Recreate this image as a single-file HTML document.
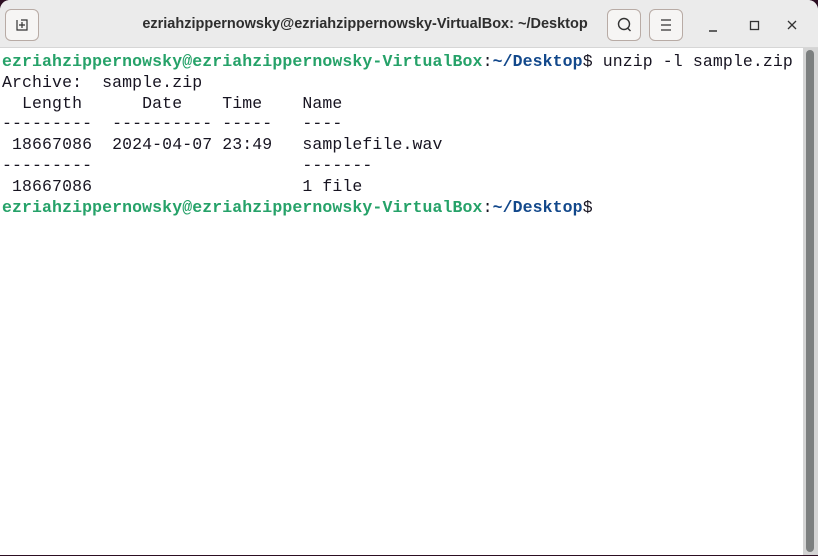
<!DOCTYPE html>
<html><head><style>
html,body{margin:0;padding:0;width:818px;height:556px;overflow:hidden;background:#2c0e22;}
.win{position:absolute;left:0;top:0;width:818px;height:555px;background:#fff;border-radius:10px 10px 0 0;overflow:hidden;}
.tb{position:absolute;left:0;top:0;width:818px;height:47px;background:#ebebeb;border-bottom:1px solid #d6d6d6;}
.title{position:absolute;left:0;width:730px;top:16px;text-align:center;font:bold 14.5px "Liberation Sans",sans-serif;color:#2e2e2e;}
.btn{position:absolute;top:9px;width:34px;height:32px;border:1px solid #b8aba5;border-radius:6px;background:#f6f5f4;box-sizing:border-box;}
.term{position:absolute;left:2px;top:52px;font:16.5px/20.8px "Liberation Mono",monospace;letter-spacing:0.11px;color:#171421;white-space:pre;}
.g{color:#26a269;font-weight:bold}.b{color:#12488b;font-weight:bold}
.sb{position:absolute;left:803px;top:48px;width:15px;height:507px;background:#d4d4d4;}
.th{position:absolute;left:806px;top:50px;width:8px;height:502px;background:#7c7f7f;border-radius:4px;}
</style></head><body>
<div class="win">
<div class="tb">
<div class="btn" style="left:5px"><svg width="32" height="30" viewBox="0 0 32 30"><path d="M11 10v10h10V10h-6M16 12v6M13 15h6" fill="none" stroke="#333" stroke-width="1.2"/></svg></div>
<div class="title">ezriahzippernowsky@ezriahzippernowsky-VirtualBox: ~/Desktop</div>
<div class="btn" style="left:607px"><svg width="32" height="30" viewBox="0 0 32 30"><circle cx="16" cy="14" r="5.5" fill="none" stroke="#333" stroke-width="1.4"/><path d="M19.5 18l3 3" stroke="#333" stroke-width="1.4"/></svg></div>
<div class="btn" style="left:649px"><svg width="32" height="30" viewBox="0 0 32 30"><path d="M11 10h10M11 15h10M11 20h10" stroke="#333" stroke-width="1.3"/></svg></div>
<svg style="position:absolute;left:700px;top:10px" width="118" height="30"><path d="M9 21h8" stroke="#333" stroke-width="1.5"/><rect x="50.5" y="11.5" width="8" height="8" fill="none" stroke="#333" stroke-width="1.3"/><path d="M88 11l8 8M96 11l-8 8" stroke="#333" stroke-width="1.3"/></svg>
</div>
<div class="term"><span class="g">ezriahzippernowsky@ezriahzippernowsky-VirtualBox</span>:<span class="b">~/Desktop</span>$ unzip -l sample.zip
Archive:  sample.zip
  Length      Date    Time    Name
---------  ---------- -----   ----
 18667086  2024-04-07 23:49   samplefile.wav
---------                     -------
 18667086                     1 file
<span class="g">ezriahzippernowsky@ezriahzippernowsky-VirtualBox</span>:<span class="b">~/Desktop</span>$ </div>
<div class="sb"></div><div class="th"></div>
</div>
</body></html>
